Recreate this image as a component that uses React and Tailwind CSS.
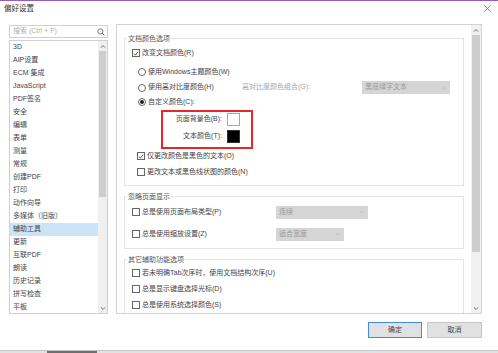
import React from "react";

function Check({ checked }) {
  return (
    <span className="w-[8px] h-[8px] border border-[#666] bg-white flex items-center justify-center shrink-0">
      {checked && (
        <svg viewBox="0 0 8 8" className="w-[7px] h-[7px]">
          <path d="M1.2 4.2 L3.2 6.2 L6.8 1.6" stroke="#333" strokeWidth="1.1" fill="none" />
        </svg>
      )}
    </span>
  );
}

function Radio({ checked }) {
  return (
    <span className="w-[8px] h-[8px] rounded-full border border-[#666] bg-white flex items-center justify-center shrink-0">
      {checked && <span className="w-[4px] h-[4px] rounded-full bg-[#1e1e1e]" />}
    </span>
  );
}

function Chevron({ up }) {
  return (
    <svg viewBox="0 0 8 6" className="w-[6px] h-[5px]">
      <path
        d={up ? "M1.2 4.5 L4 1.7 L6.8 4.5" : "M1.2 1.5 L4 4.3 L6.8 1.5"}
        stroke="#5a5a5a"
        strokeWidth="1.2"
        fill="none"
      />
    </svg>
  );
}

function Select({ text, w }) {
  return (
    <div className={"h-[13px] bg-[#d5d5d5] flex items-center justify-between pl-[3px] pr-[4px] text-[#9a9a9a] " + w}>
      <span>{text}</span>
      <svg viewBox="0 0 8 6" className="w-[5px] h-[4px]">
        <path d="M1 1.5 L4 4.3 L7 1.5" stroke="#b0b0b0" strokeWidth="1" fill="none" />
      </svg>
    </div>
  );
}

function Group({ title, className, children }) {
  return (
    <div className={"border border-[#e4e4e4] flex flex-col shrink-0 " + className}>
      <div className="-mt-[5px] ml-[2px] px-[1px] bg-white w-fit h-[9px] leading-[9px] text-[#555]">{title}</div>
      {children}
    </div>
  );
}

const items = [
  "3D",
  "AIP设置",
  "ECM 集成",
  "JavaScript",
  "PDF签名",
  "安全",
  "编辑",
  "表单",
  "测量",
  "常规",
  "创建PDF",
  "打印",
  "动作向导",
  "多媒体（旧版）",
  "辅助工具",
  "更新",
  "互联PDF",
  "朗读",
  "历史记录",
  "拼写检查",
  "平板",
];

export default function App() {
  return (
    <div className="w-[498px] h-[353px] bg-white overflow-hidden flex flex-col text-[7px] text-[#444] font-['Liberation_Sans','Noto_Sans_CJK_SC',sans-serif]">
      <div className="h-[1px] bg-[#9b59b6] shrink-0" />
      {/* title bar */}
      <div className="h-[15px] flex items-center justify-between pl-[4px] pr-[7px] shrink-0">
        <span className="text-[7.5px] text-[#333]">偏好设置</span>
        <svg viewBox="0 0 8 8" className="w-[7px] h-[7px]">
          <path d="M0.5 0.5 L7.5 7.5 M7.5 0.5 L0.5 7.5" stroke="#777" strokeWidth="0.9" />
        </svg>
      </div>

      {/* main */}
      <div className="mt-[8px] flex pl-[9px] gap-[8px] h-[290px] shrink-0">
        {/* left column */}
        <div className="w-[99px] flex flex-col">
          <div className="mt-[1px] h-[13px] border border-[#cfcfcf] flex items-center justify-between pl-[3px] pr-[2px]">
            <span className="text-[#b0b0b0]">搜索 (Ctrl + F)</span>
            <svg viewBox="0 0 10 10" className="w-[8px] h-[8px]">
              <circle cx="4.2" cy="4.2" r="3.2" stroke="#555" strokeWidth="1" fill="none" />
              <path d="M6.6 6.6 L9.2 9.2" stroke="#555" strokeWidth="1.1" />
            </svg>
          </div>
          <div className="mt-[2px] h-[274px] border border-[#cfcfcf] flex overflow-hidden">
            <div className="flex-1 flex flex-col">
              {items.map((t) => (
                <div
                  key={t}
                  className={
                    "h-[13px] shrink-0 flex items-center pl-[3px] " +
                    (t === "辅助工具" ? "bg-[#cce4f7]" : "")
                  }
                >
                  {t}
                </div>
              ))}
            </div>
            <div className="w-[9px] bg-[#f0f0f0] flex flex-col">
              <div className="h-[10px] flex items-center justify-center">
                <Chevron up />
              </div>
              <div className="flex-1 flex flex-col">
                <div className="h-[146px] bg-[#cdcdcd] mx-[1px]" />
              </div>
              <div className="h-[10px] flex items-center justify-center">
                <Chevron />
              </div>
            </div>
          </div>
        </div>

        {/* right panel */}
        <div className="w-[366px] h-[290px] border border-[#d2d2d2] flex">
          <div className="flex-1 pl-[7px] pr-[7px] overflow-hidden flex flex-col">
            {/* group 1 */}
            <Group title="文档颜色选项" className="mt-[13px] pb-[4px]">
              <div className="mt-[2px] h-[16px] flex items-center pl-[7px] gap-[2px]">
                <Check checked />
                <span>改变文档颜色(R)</span>
              </div>
              <div className="mt-[3px] h-[16px] flex items-center pl-[13px] gap-[2px]">
                <Radio />
                <span>使用Windows主题颜色(W)</span>
              </div>
              <div className="h-[15px] flex items-center pl-[13px]">
                <div className="w-[104px] flex items-center gap-[2px]">
                  <Radio />
                  <span>使用高对比度颜色(H)</span>
                </div>
                <div className="w-[120px] text-[#a8a8a8]">高对比度颜色组合(G):</div>
                <Select text="黑底绿字文本" w="w-[88px]" />
              </div>
              <div className="h-[14px] flex items-center pl-[13px] gap-[2px]">
                <Radio checked />
                <span>自定义颜色(C):</span>
              </div>
              <div className="mt-[1px] ml-[36px] w-[92px] h-[39px] border-2 border-[#e8262b] flex flex-col items-end pr-[11px] pt-[1px] gap-[4px]">
                <div className="flex items-center gap-[5px] h-[13px]">
                  <span>页面背景色(B):</span>
                  <span className="w-[13px] h-[13px] border border-[#a8a8a8] bg-white" />
                </div>
                <div className="flex items-center gap-[5px] h-[13px]">
                  <span>文本颜色(T):</span>
                  <span className="w-[13px] h-[13px] border border-[#333] bg-black" />
                </div>
              </div>
              <div className="h-[14px] flex items-center pl-[12px] gap-[2px]">
                <Check checked />
                <span>仅更改颜色是黑色的文本(O)</span>
              </div>
              <div className="h-[18px] flex items-center pl-[12px] gap-[2px]">
                <Check />
                <span>更改文本或黑色线状图的颜色(N)</span>
              </div>
            </Group>

            {/* group 2 */}
            <Group title="忽略页面显示" className="mt-[10px] pb-[6px]">
              <div className="mt-[3px] h-[16px] flex items-center pl-[7px]">
                <div className="w-[144px] flex items-center gap-[2px]">
                  <Check />
                  <span>总是使用页面布局类型(P)</span>
                </div>
                <Select text="连续" w="w-[92px]" />
              </div>
              <div className="mt-[6px] h-[16px] flex items-center pl-[7px]">
                <div className="w-[144px] flex items-center gap-[2px]">
                  <Check />
                  <span>总是使用缩放设置(Z)</span>
                </div>
                <Select text="适合宽度" w="w-[68px]" />
              </div>
            </Group>

            {/* group 3 */}
            <Group title="其它辅助功能选项" className="mt-[10px] pb-[12px]">
              <div className="mt-[1px] h-[16px] flex items-center pl-[7px] gap-[2px]">
                <Check />
                <span>若未明确Tab次序时，使用文档结构次序(U)</span>
              </div>
              <div className="h-[16px] flex items-center pl-[7px] gap-[2px]">
                <Check />
                <span>总是显示键盘选择光标(D)</span>
              </div>
              <div className="h-[16px] flex items-center pl-[7px] gap-[2px]">
                <Check />
                <span>总是使用系统选择颜色(S)</span>
              </div>
            </Group>
          </div>
          <div className="w-[10px] bg-[#f0f0f0] flex flex-col">
            <div className="h-[10px] flex items-center justify-center">
              <Chevron up />
            </div>
            <div className="flex-1 flex flex-col">
              <div className="h-[217px] bg-[#cdcdcd] mx-[1px]" />
            </div>
            <div className="h-[10px] flex items-center justify-center">
              <Chevron />
            </div>
          </div>
        </div>
      </div>

      {/* buttons */}
      <div className="mt-[8px] h-[16px] flex justify-end gap-[5px] pr-[16px] shrink-0">
        <button className="w-[54px] h-[16px] bg-[#e1e1e1] border border-[#3d8ee0] flex items-center justify-center text-[#444]">
          确定
        </button>
        <button className="w-[55px] h-[16px] bg-[#e1e1e1] border border-[#c4c4c4] flex items-center justify-center text-[#444]">
          取消
        </button>
      </div>

      <div className="mt-auto h-[1px] bg-[#c4c4c4] shrink-0" />
      <div className="h-[2px] bg-[#e2e2e2] flex shrink-0">
        <div className="ml-[47px] w-[50px] bg-[#6e6e6e]" />
      </div>
    </div>
  );
}
